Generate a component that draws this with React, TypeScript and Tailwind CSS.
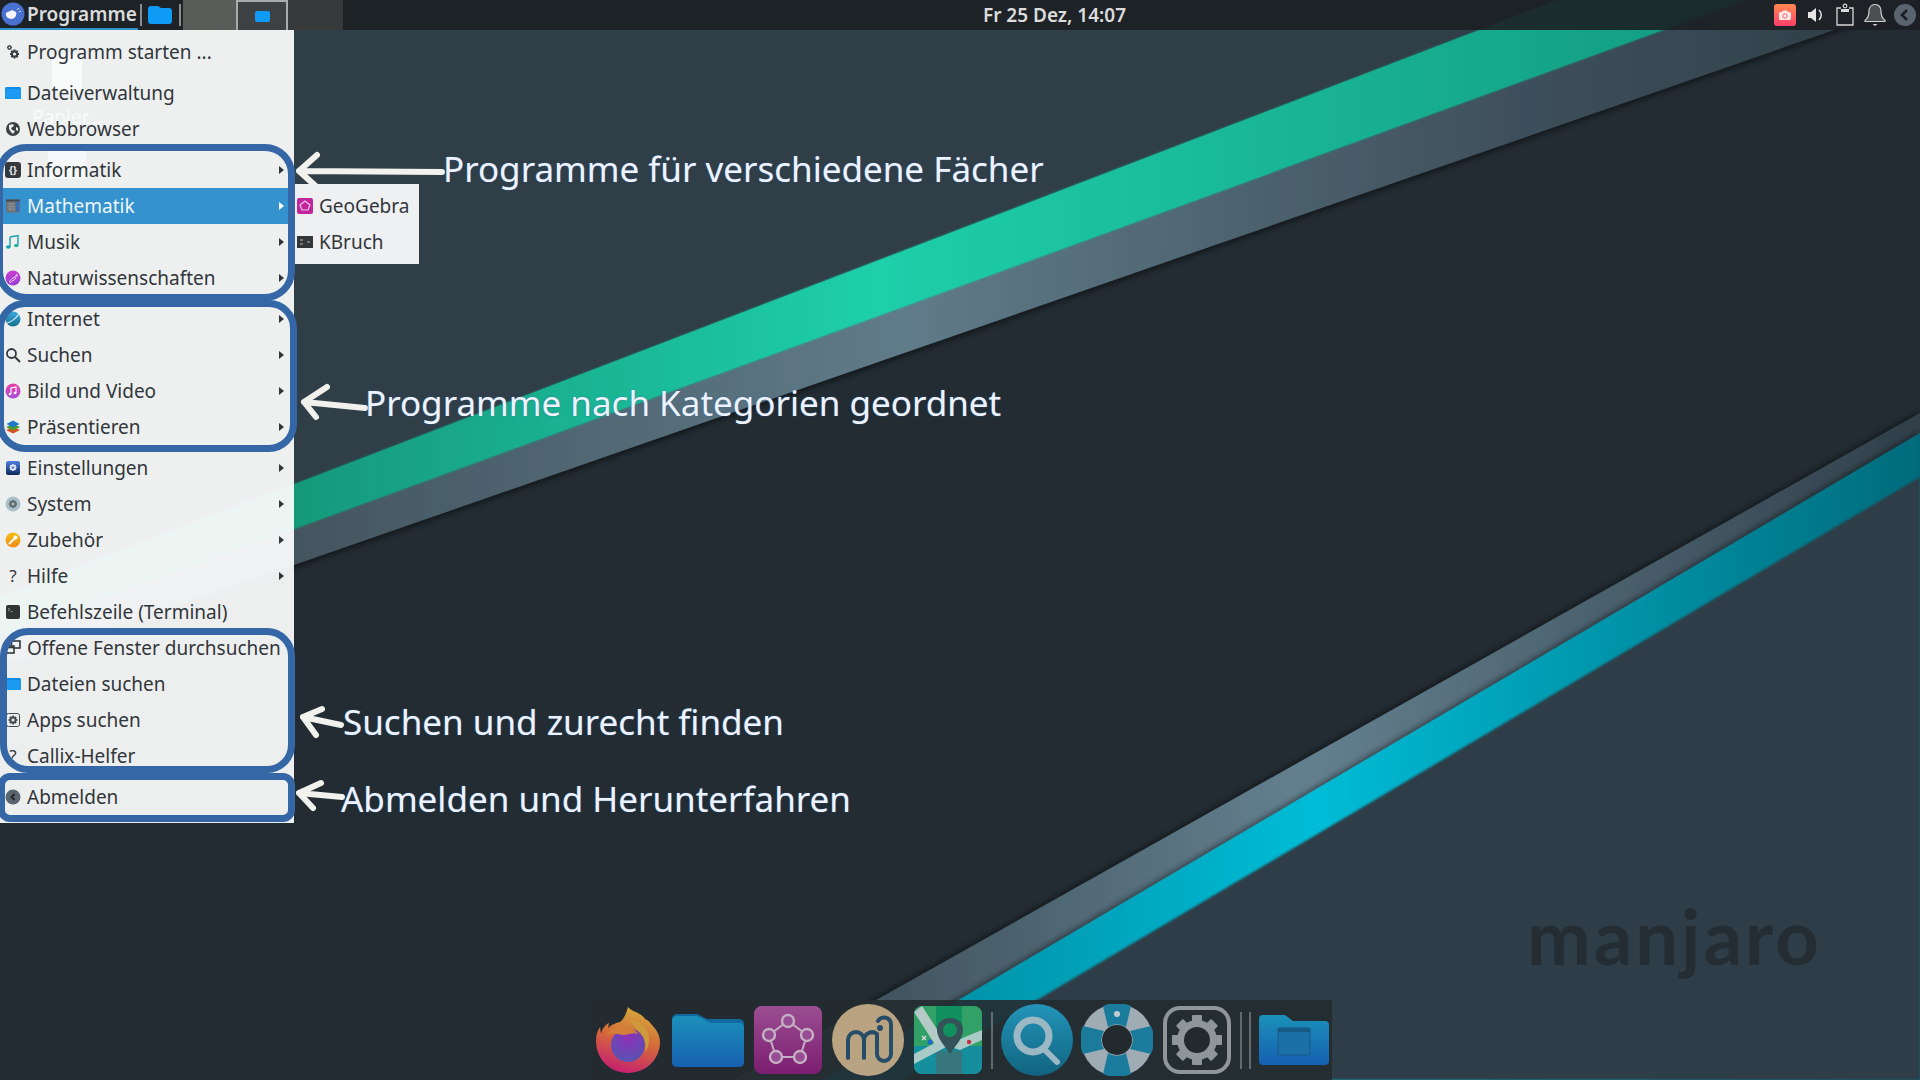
import { ReactNode } from "react";

const Svg = ({ children, size = 16, className = "" }: { children: ReactNode; size?: number; className?: string }) => (
  <svg width={size} height={size} viewBox="0 0 16 16" className={`shrink-0 ${className}`}>
    {children}
  </svg>
);

const Gear = ({ cx, cy, r, fill, hole }: { cx: number; cy: number; r: number; fill: string; hole: string }) => (
  <g>
    {[0, 45, 90, 135].map((a) => (
      <rect key={a} x={cx - r * 0.28} y={cy - r * 1.25} width={r * 0.56} height={r * 2.5} fill={fill} transform={`rotate(${a} ${cx} ${cy})`} />
    ))}
    <circle cx={cx} cy={cy} r={r} fill={fill} />
    <circle cx={cx} cy={cy} r={r * 0.45} fill={hole} />
  </g>
);

const FolderSmall = () => (
  <Svg>
    <rect x="0" y="2" width="16" height="12" rx="1.5" fill="#0d8be6" />
    <rect x="0" y="4" width="16" height="10" rx="1" fill="#1a9af0" />
  </Svg>
);

const icons: Record<string, ReactNode> = {
  run: (
    <Svg>
      <Gear cx={9.5} cy={10} r={3.6} fill="#3a3f44" hole="#eff0f1" />
      <Gear cx={4.5} cy={3.5} r={2} fill="#3a3f44" hole="#eff0f1" />
    </Svg>
  ),
  folder: <FolderSmall />,
  globe: (
    <Svg>
      <circle cx="8" cy="8" r="7" fill="#3b4045" />
      <path d="M4 4l4-1 1 2-3 2 1 2 3 1-2 3-2-2-2-3zM11 6l2 1 0 3-2-1z" fill="#eff0f1" />
    </Svg>
  ),
  code: (
    <div className="w-4 h-4 rounded-[3px] bg-[#35393d] text-[#eff0f1] text-[10px] leading-4 text-center font-bold shrink-0">{"{}"}</div>
  ),
  calc: (
    <Svg>
      <rect x="1" y="1.5" width="14" height="13" rx="1" fill="#6d7378" />
      <rect x="1" y="1.5" width="14" height="2" fill="#474b50" />
      <rect x="11" y="3.5" width="3" height="10" fill="#2f70c0" />
      <path d="M3 6h7M3 8.500h7M3 11h7M5 4v9M8 4v9" stroke="#8f9599" strokeWidth="0.8" />
    </Svg>
  ),
  music: (
    <Svg>
      <path d="M5 3l8-1.500v9" stroke="#1c9cb0" strokeWidth="1.400" fill="none" />
      <path d="M5 3v10" stroke="#1c9cb0" strokeWidth="1.400" />
      <ellipse cx="3.300" cy="13" rx="2.300" ry="1.800" fill="#1c9cb0" />
      <ellipse cx="11.300" cy="11.500" rx="2.300" ry="1.800" fill="#25b09a" />
    </Svg>
  ),
  science: (
    <Svg>
      <defs>
        <linearGradient id="sci" x1="0" y1="0" x2="0" y2="1">
          <stop offset="0" stopColor="#c83fd0" />
          <stop offset="1" stopColor="#9a3fd8" />
        </linearGradient>
      </defs>
      <circle cx="8" cy="8" r="7.500" fill="url(#sci)" />
      <path d="M4 12C6 10 6 9 8 8s3-2 4-4M5 13c2-3 4-2 5-4s1-3 3-4" stroke="#f0d8f5" strokeWidth="1" fill="none" />
    </Svg>
  ),
  internet: (
    <Svg>
      <defs>
        <linearGradient id="net" x1="0" y1="0" x2="0" y2="1">
          <stop offset="0" stopColor="#3fa8e0" />
          <stop offset="1" stopColor="#12708a" />
        </linearGradient>
      </defs>
      <circle cx="8" cy="8" r="7.500" fill="url(#net)" />
      <path d="M2 12C6 11 11 7 14 3" stroke="#e6f4fa" strokeWidth="1.200" fill="none" />
    </Svg>
  ),
  search: (
    <Svg>
      <circle cx="6.500" cy="6.500" r="4.500" stroke="#33383d" strokeWidth="1.800" fill="none" />
      <path d="M10 10l5 5" stroke="#33383d" strokeWidth="2" />
    </Svg>
  ),
  media: (
    <Svg>
      <defs>
        <linearGradient id="med" x1="0" y1="0" x2="0" y2="1">
          <stop offset="0" stopColor="#e83fa8" />
          <stop offset="1" stopColor="#a94fd8" />
        </linearGradient>
      </defs>
      <circle cx="8" cy="8" r="7.500" fill="url(#med)" />
      <path d="M6 11V5l5-1v6" stroke="#fff" strokeWidth="1.100" fill="none" />
      <circle cx="5" cy="11" r="1.300" fill="#fff" />
      <circle cx="10" cy="10" r="1.300" fill="#fff" />
    </Svg>
  ),
  layers: (
    <Svg>
      <path d="M1 11l7-3 7 3-7 3.500z" fill="#d8501f" />
      <path d="M1 8l7-3 7 3-7 3.500z" fill="#4a9a2c" />
      <path d="M1.500 5L8 1.500 14.500 5 8 8.500z" fill="#1f78c8" />
    </Svg>
  ),
  settings: (
    <Svg>
      <defs>
        <linearGradient id="set" x1="0" y1="0" x2="0" y2="1">
          <stop offset="0" stopColor="#4f7fe0" />
          <stop offset="1" stopColor="#0e2a5a" />
        </linearGradient>
      </defs>
      <rect x="1" y="1" width="14" height="14" rx="2" fill="url(#set)" />
      <Gear cx={8} cy={7.500} r={2.800} fill="#e6ecfa" hole="#4f6fc8" />
    </Svg>
  ),
  system: (
    <Svg>
      <circle cx="8" cy="8" r="7.500" fill="#a9c0c8" />
      <Gear cx={8} cy={8} r={3.300} fill="#5f6a70" hole="#a9c0c8" />
    </Svg>
  ),
  tools: (
    <Svg>
      <defs>
        <linearGradient id="too" x1="0" y1="0" x2="0" y2="1">
          <stop offset="0" stopColor="#f5bd10" />
          <stop offset="1" stopColor="#f08c1a" />
        </linearGradient>
      </defs>
      <circle cx="8" cy="8" r="7.500" fill="url(#too)" />
      <path d="M4.500 11.500L9.500 6.500" stroke="#fff" strokeWidth="1.800" strokeLinecap="round" />
      <circle cx="10.500" cy="5.500" r="2" fill="#fff" />
    </Svg>
  ),
  help: <div className="w-4 h-5 text-[17px] leading-5 text-center text-[#33383d] shrink-0">?</div>,
  terminal: (
    <Svg>
      <rect x="1" y="1" width="14" height="14" rx="2" fill="#2e3532" />
      <path d="M3 4l2 1.500-2 1.500M5.500 7.500h2" stroke="#bbb" strokeWidth="0.700" fill="none" />
    </Svg>
  ),
  windows: (
    <Svg>
      <rect x="6.500" y="1" width="8.500" height="7" fill="none" stroke="#33383d" strokeWidth="1.600" />
      <rect x="1" y="6" width="8" height="7" fill="#eff0f1" stroke="#33383d" strokeWidth="1.600" />
      <path d="M1 7.500h8" stroke="#33383d" strokeWidth="1.600" />
    </Svg>
  ),
  apps: (
    <Svg>
      <rect x="1.500" y="1.500" width="13" height="13" rx="2" fill="none" stroke="#44494e" strokeWidth="1" />
      <Gear cx={8} cy={8} r={3.500} fill="#44494e" hole="#eff0f1" />
    </Svg>
  ),
  logout: (
    <Svg>
      <circle cx="8" cy="8" r="7.500" fill="#5a6570" />
      <path d="M9.500 5L6.500 8l3 3" stroke="#1f2428" strokeWidth="1.800" fill="none" />
    </Svg>
  ),
};

type Item = { label: string; icon: string; arrow?: boolean; active?: boolean; sep?: boolean };

const menu: Item[] = [
  { label: "Programm starten ...", icon: "run", sep: true },
  { label: "Dateiverwaltung", icon: "folder" },
  { label: "Webbrowser", icon: "globe", sep: true },
  { label: "Informatik", icon: "code", arrow: true },
  { label: "Mathematik", icon: "calc", arrow: true, active: true },
  { label: "Musik", icon: "music", arrow: true },
  { label: "Naturwissenschaften", icon: "science", arrow: true, sep: true },
  { label: "Internet", icon: "internet", arrow: true },
  { label: "Suchen", icon: "search", arrow: true },
  { label: "Bild und Video", icon: "media", arrow: true },
  { label: "Präsentieren", icon: "layers", arrow: true, sep: true },
  { label: "Einstellungen", icon: "settings", arrow: true },
  { label: "System", icon: "system", arrow: true },
  { label: "Zubehör", icon: "tools", arrow: true },
  { label: "Hilfe", icon: "help", arrow: true },
  { label: "Befehlszeile (Terminal)", icon: "terminal" },
  { label: "Offene Fenster durchsuchen", icon: "windows" },
  { label: "Dateien suchen", icon: "folder" },
  { label: "Apps suchen", icon: "apps" },
  { label: "Callix-Helfer", icon: "help", sep: true },
  { label: "Abmelden", icon: "logout" },
];

const Row = ({ item }: { item: Item }) => (
  <>
    <div className={`h-9 flex items-center gap-[6px] pl-[5px] pr-[10px] ${item.active ? "bg-[#3492ce] text-[#eef6fb]" : "text-[#31363b]"}`}>
      {icons[item.icon]}
      <span className="flex-1 whitespace-nowrap">{item.label}</span>
      {item.arrow && (
        <span className={`w-0 h-0 border-y-[4px] border-y-transparent border-l-[5px] ${item.active ? "border-l-white" : "border-l-[#31363b]"}`} />
      )}
    </div>
    {item.sep && <div className="h-[5px]" />}
  </>
);

const Wallpaper = () => (
  <svg className="absolute inset-0" width="1920" height="1080" viewBox="0 0 1920 1080">
    <defs>
      <linearGradient id="green" gradientUnits="userSpaceOnUse" x1="290" y1="0" x2="1745" y2="0">
        <stop offset="0" stopColor="#15987a" />
        <stop offset="0.4" stopColor="#1ecfaa" />
        <stop offset="0.8" stopColor="#16ab8c" />
        <stop offset="1" stopColor="#129a80" />
      </linearGradient>
      <linearGradient id="slate" gradientUnits="userSpaceOnUse" x1="290" y1="0" x2="1900" y2="0">
        <stop offset="0" stopColor="#43555f" />
        <stop offset="0.38" stopColor="#607b89" />
        <stop offset="0.75" stopColor="#3f515c" />
        <stop offset="1" stopColor="#2f3e47" />
      </linearGradient>
      <linearGradient id="slate2" gradientUnits="userSpaceOnUse" x1="800" y1="0" x2="1920" y2="0">
        <stop offset="0" stopColor="#3a4c56" />
        <stop offset="0.45" stopColor="#64808f" />
        <stop offset="1" stopColor="#303f49" />
      </linearGradient>
      <linearGradient id="teal" gradientUnits="userSpaceOnUse" x1="880" y1="0" x2="1920" y2="0">
        <stop offset="0" stopColor="#008a9f" />
        <stop offset="0.42" stopColor="#00bcd6" />
        <stop offset="1" stopColor="#006b7b" />
      </linearGradient>
      <filter id="down" x="-5%" y="-20%" width="110%" height="140%">
        <feDropShadow dx="0" dy="3" stdDeviation="3" floodColor="#000" floodOpacity="0.5" />
      </filter>
      <filter id="up" x="-5%" y="-20%" width="110%" height="140%">
        <feDropShadow dx="0" dy="-2" stdDeviation="3" floodColor="#000" floodOpacity="0.5" />
      </filter>
      <filter id="soft">
        <feGaussianBlur stdDeviation="1.200" />
      </filter>
    </defs>
    <rect width="1920" height="1080" fill="#222c32" />
    <polygon points="0,0 1920,0 1920,0 0,667" fill="#2f3e47" />
    <polygon points="0,667 1920,0 1745,0 0,636" fill="url(#slate)" filter="url(#down)" />
    <polygon points="0,636 1745,0 1558,0 0,597" fill="url(#green)" filter="url(#soft)" />
    <polygon points="0,636 1745,0 1558,0 0,597" fill="url(#green)" />
    <polygon points="734,1080 1920,413 1920,1080" fill="url(#slate2)" filter="url(#up)" />
    <polygon points="823,1080 1920,433 1920,1080" fill="url(#teal)" filter="url(#up)" />
    <polygon points="902,1080 1920,477 1920,1080" fill="#2f3e47" filter="url(#soft)" />
  </svg>
);

const Rings = () => (
  <>
    <div className="absolute left-[-4px] top-[144px] w-[299px] h-[157px] border-[7px] border-[#3566a6] rounded-[30px]" />
    <div className="absolute left-[-3px] top-[300px] w-[300px] h-[152px] border-[7px] border-[#3566a6] rounded-[28px]" />
    <div className="absolute left-0 top-[628px] w-[295px] h-[145px] border-[7px] border-[#3566a6] rounded-[28px]" />
    <div className="absolute left-[-2px] top-[773px] w-[297px] h-[49px] border-[7px] border-[#3566a6] rounded-[12px]" />
  </>
);

const Arrows = () => (
  <svg className="absolute inset-0 pointer-events-none" width="1920" height="1080" viewBox="0 0 1920 1080">
    <g stroke="#f1f1ee" strokeWidth="6" strokeLinecap="round" strokeLinejoin="round" fill="none">
      <path d="M442 172L299 171M317 155L299 171L319 189" />
      <path d="M365 408L304 402M327 387L304 402L316 417" />
      <path d="M341 725L303 717M322 709L303 717L316 735" />
      <path d="M342 797L299 793M321 783L299 793L313 808" />
    </g>
  </svg>
);

const labels = [
  { text: "Programme für verschiedene Fächer", className: "left-[443px] top-[146px]" },
  { text: "Programme nach Kategorien geordnet", className: "left-[365px] top-[380px]" },
  { text: "Suchen und zurecht finden", className: "left-[343px] top-[699px]" },
  { text: "Abmelden und Herunterfahren", className: "left-[341px] top-[776px]" },
];

const KickoffLogo = () => (
  <svg width="24" height="24" viewBox="0 0 24 24" className="shrink-0">
    <circle cx="12" cy="12" r="11.500" fill="#4a70d2" />
    <path d="M5 11c2-2 4-1 6-3 1 1 3 1 4 2 1 2 0 6-4 7-4 0-7-3-6-6z" fill="#f4f6fb" />
    <path d="M16 8l2-2M18 10l2-1" stroke="#dfe7f8" strokeWidth="1" />
  </svg>
);

const Tray = () => (
  <div className="flex items-center h-full pr-1">
    <svg width="22" height="22" viewBox="0 0 22 22" className="mr-3">
      <defs>
        <linearGradient id="cam" x1="0" y1="0" x2="0" y2="1">
          <stop offset="0" stopColor="#ff8a50" />
          <stop offset="1" stopColor="#ff3f6c" />
        </linearGradient>
      </defs>
      <rect width="22" height="22" rx="3" fill="url(#cam)" />
      <rect x="5" y="8" width="12" height="8" rx="1.500" fill="#fde8e4" />
      <rect x="8.500" y="6.500" width="5" height="2" fill="#fde8e4" />
      <circle cx="11" cy="12" r="2.200" fill="none" stroke="#f2607a" strokeWidth="1" />
    </svg>
    <svg width="16" height="16" viewBox="0 0 16 16" className="mr-3">
      <path d="M0 5h3l5-4v14l-5-4H0z" fill="#e6e6e6" />
      <path d="M11 3c3 3 3 7 0 10" stroke="#e6e6e6" strokeWidth="1.500" fill="none" />
    </svg>
    <svg width="18" height="24" viewBox="0 0 18 24" className="mr-[10px]">
      <path d="M5 5H1v17h16V5h-4" fill="none" stroke="#d8d8d8" strokeWidth="1.300" />
      <circle cx="9" cy="3" r="1.800" fill="none" stroke="#d8d8d8" strokeWidth="1.200" />
      <path d="M5 9V6h8v3z" fill="#d8d8d8" />
    </svg>
    <svg width="22" height="24" viewBox="0 0 22 24" className="mr-2">
      <path d="M11 1.500c-4 0-6 3-6 7 0 5-1.500 7-4 9v1h20v-1c-2.500-2-4-4-4-9 0-4-2-7-6-7z" fill="#4c4f52" stroke="#d0d0d0" strokeWidth="1.200" />
      <path d="M8.500 21h5l-2.500 2z" fill="#d0d0d0" />
    </svg>
    <svg width="22" height="22" viewBox="0 0 22 22">
      <circle cx="11" cy="11" r="11" fill="#5a6470" />
      <path d="M13 6l-5 5 5 5" stroke="#1c2025" strokeWidth="2.600" fill="none" />
    </svg>
  </div>
);

const Firefox = () => (
  <svg width="64" height="66" viewBox="0 0 64 66" className="shrink-0">
    <defs>
      <linearGradient id="ffo" x1="0.700" y1="0" x2="0.400" y2="1">
        <stop offset="0" stopColor="#e8bd3c" />
        <stop offset="0.5" stopColor="#e8703a" />
        <stop offset="1" stopColor="#d81f78" />
      </linearGradient>
      <radialGradient id="ffp" cx="0.500" cy="0.300" r="0.800">
        <stop offset="0" stopColor="#9a30c8" />
        <stop offset="1" stopColor="#5560c0" />
      </radialGradient>
    </defs>
    <path d="M32 0c4 5 14 6 17 12 3 1 5 3 6 5 4 4 9 10 9 18 0 17-14 31-32 31S0 52 0 34c0-5 1-10 4-14l1 7c1-5 4-9 8-11l-1 5c4-4 8-5 12-6 4-3 6-8 8-15z" fill="url(#ffo)" />
    <circle cx="32" cy="38" r="17" fill="url(#ffp)" />
    <path d="M9 28c7-2 12-1 18 0 6 0 10-3 15-1-3-5-8-8-14-8-7 0-13 3-19 9z" fill="#e8883a" />
    <path d="M34 13c8 0 15 6 18 13 2 7 1 14-3 19 2-10-2-18-8-22-2-4-4-7-7-10z" fill="#e0a83a" />
  </svg>
);

const Folder = () => (
  <svg width="72" height="53" viewBox="0 0 72 53" className="shrink-0">
    <defs>
      <linearGradient id="fold" x1="0" y1="0" x2="0" y2="1">
        <stop offset="0" stopColor="#1b9cc8" />
        <stop offset="1" stopColor="#1566c0" />
      </linearGradient>
    </defs>
    <path d="M5 0h20l10 5h32a5 5 0 015 5v38a5 5 0 01-5 5H5a5 5 0 01-5-5V5a5 5 0 015-5z" fill="#0f73ad" />
    <path d="M0 7a5 5 0 015-5h20l10 5 4 2h28a5 5 0 015 5v34a5 5 0 01-5 5H5a5 5 0 01-5-5z" fill="url(#fold)" />
  </svg>
);

const GeoGebra = () => (
  <svg width="68" height="68" viewBox="0 0 68 68" className="shrink-0">
    <defs>
      <linearGradient id="geo" x1="0" y1="0" x2="0" y2="1">
        <stop offset="0" stopColor="#a9529c" />
        <stop offset="1" stopColor="#851c78" />
      </linearGradient>
    </defs>
    <rect width="68" height="68" rx="8" fill="url(#geo)" />
    <polygon points="34,15 53,29 46,51 22,51 15,29" fill="none" stroke="#d5bfd3" strokeWidth="2" />
    {[
      [34, 15],
      [53, 29],
      [46, 51],
      [22, 51],
      [15, 29],
    ].map(([x, y]) => (
      <circle key={x} cx={x} cy={y} r="6" fill="#a5509e" stroke="#d5bfd3" strokeWidth="2.400" />
    ))}
  </svg>
);

const MuseScore = () => (
  <svg width="72" height="72" viewBox="0 0 72 72" className="shrink-0">
    <circle cx="36" cy="36" r="36" fill="#c9b08a" />
    <path d="M16 54V36a8 8 0 0116 0v18M32 36a8 8 0 0113-6V50a7 7 0 0014 0V20a7 7 0 00-13-3" fill="none" stroke="#27506e" strokeWidth="4" strokeLinecap="round" />
    <circle cx="48" cy="24" r="3" fill="#27506e" />
  </svg>
);

const Maps = () => (
  <svg width="68" height="68" viewBox="0 0 68 68" className="shrink-0">
    <clipPath id="mapc">
      <rect width="68" height="68" rx="8" />
    </clipPath>
    <g clipPath="url(#mapc)">
      <rect width="68" height="68" fill="#35ad6c" />
      <rect x="22" width="26" height="68" fill="#0f9c62" />
      <rect x="0" y="40" width="68" height="28" fill="#1399a8" />
      <rect x="22" y="45" width="26" height="23" fill="#3a7f86" />
      <path d="M0 58L34 40 46 44 68 34V24L46 33 34 30 0 48z" fill="#b8dcd8" />
      <path d="M0 6L22 40 30 34 8 0z" fill="#c5dbd6" />
      <path d="M36 12c-9 0-13 6-13 12 0 8 7 15 13 24 6-9 13-16 13-24 0-6-4-12-13-12z" fill="#37565c" />
      <circle cx="36" cy="24" r="7" fill="#0f9c62" />
      <circle cx="16" cy="36" r="2.500" fill="#1e6fd8" />
      <circle cx="55" cy="36" r="2.200" fill="#d8303a" />
      <path d="M8 30l4 4M12 30l-4 4" stroke="#e8f0ee" strokeWidth="1.300" />
    </g>
  </svg>
);

const SearchApp = () => (
  <svg width="72" height="72" viewBox="0 0 72 72" className="shrink-0">
    <defs>
      <linearGradient id="sea" x1="0" y1="0" x2="0" y2="1">
        <stop offset="0" stopColor="#23a0c8" />
        <stop offset="1" stopColor="#0f6a88" />
      </linearGradient>
    </defs>
    <circle cx="36" cy="36" r="36" fill="url(#sea)" />
    <circle cx="32" cy="32" r="16" fill="none" stroke="#a8c8d4" strokeWidth="7" />
    <path d="M44 46l12 12" stroke="#a8c8d4" strokeWidth="6" strokeLinecap="round" />
  </svg>
);

const Lifebuoy = () => (
  <svg width="72" height="72" viewBox="0 0 72 72" className="shrink-0">
    <circle cx="36" cy="36" r="36" fill="#aebac1" />
    <path d="M22 2a36 36 0 0128 0l-5 21a16 16 0 00-18 0zM70 22a36 36 0 010 28l-21-5a16 16 0 000-18zM50 70a36 36 0 01-28 0l5-21a16 16 0 0018 0zM2 50a36 36 0 010-28l21 5a16 16 0 000 18z" fill="#1a84a8" />
    <circle cx="36" cy="36" r="15" fill="#232a2e" />
    <circle cx="36" cy="10" r="3" fill="#d4dde2" />
  </svg>
);

const SettingsApp = () => (
  <svg width="68" height="68" viewBox="0 0 68 68" className="shrink-0">
    <rect x="2" y="2" width="64" height="64" rx="15" fill="none" stroke="#9aa1a7" strokeWidth="4" />
    {[0, 45, 90, 135].map((a) => (
      <rect key={a} x="29" y="9" width="10" height="50" rx="1" fill="#9aa1a7" transform={`rotate(${a} 34 34)`} />
    ))}
    <circle cx="34" cy="34" r="20" fill="#9aa1a7" />
    <circle cx="34" cy="34" r="13" fill="#232a2e" />
  </svg>
);

const WindowFolder = () => (
  <svg width="70" height="50" viewBox="0 0 70 50" className="shrink-0">
    <defs>
      <linearGradient id="wf" x1="0" y1="0" x2="0" y2="1">
        <stop offset="0" stopColor="#1b9cc8" />
        <stop offset="1" stopColor="#1566c0" />
      </linearGradient>
    </defs>
    <path d="M4 0h22l8 6h32a4 4 0 014 4v36a4 4 0 01-4 4H4a4 4 0 01-4-4V4a4 4 0 014-4z" fill="url(#wf)" />
    <rect x="19" y="13" width="32" height="27" rx="1" fill="#1a78b4" stroke="#155f90" strokeWidth="1" />
    <rect x="19" y="13" width="32" height="4" fill="#155f90" />
  </svg>
);

export default function App() {
  return (
    <div className="relative w-[1920px] h-[1080px] overflow-hidden flex flex-col font-['Noto_Sans',sans-serif]">
      <Wallpaper />

      {/* desktop icons show faintly through the menu */}
      <div className="absolute left-[32px] top-[55px] w-[70px] flex flex-col items-center text-white text-[19px]">
        <div className="w-[30px] h-[36px] bg-white rounded-b-[5px] rounded-t-[2px]" />
        <span className="mt-[14px] leading-6 whitespace-nowrap">Papier...</span>
        <div className="w-[38px] h-[28px] mt-[22px] bg-[#bfe4ff] rounded-[3px]" />
      </div>

      <div className="absolute left-[1527px] top-[894px] text-[76px] leading-[84px] font-bold tracking-[3px] text-[#232d33] font-['Lato',sans-serif]">
        manjaro
      </div>

      <header className="relative h-[30px] flex items-center justify-between bg-[#1c1f23]/90 text-[#dcdcdc] text-[19px] font-semibold">
        <div className="flex items-center h-full">
          <div className="flex items-center gap-[2px] h-full pl-[1px] border-b-[2px] border-[#3492ce] w-[138px]">
            <KickoffLogo />
            <span>Programme</span>
          </div>
          <span className="w-[2px] h-[22px] bg-[#8a8d90] ml-[2px]" />
          <svg width="24" height="18" viewBox="0 0 24 18" className="ml-[6px]">
            <path d="M3 0h7l3 2h8a3 3 0 013 3v10a3 3 0 01-3 3H3a3 3 0 01-3-3V3a3 3 0 013-3z" fill="#0f9af5" />
          </svg>
          <span className="w-[2px] h-[22px] bg-[#8a8d90] ml-[7px]" />
          <div className="flex h-full ml-[2px]">
            <div className="w-[53px] bg-[#5a5c5a]" />
            <div className="w-[52px] bg-[#3e4144] border-2 border-b-0 border-[#a9abad] flex items-center justify-center">
              <div className="w-[15px] h-[11px] rounded-[2px] bg-[#0f9af5]" />
            </div>
            <div className="w-[55px] bg-[#37393b]" />
          </div>
        </div>
        <span className="mr-[8px]">Fr 25 Dez, 14:07</span>
        <Tray />
      </header>

      <main className="flex-1" />

      <footer className="relative mx-auto h-20 w-[744px] pl-2 flex items-center bg-[#232b30]/90 [&>*]:opacity-90">
        <Firefox />
        <div className="ml-3"><Folder /></div>
        <div className="ml-[10px]"><GeoGebra /></div>
        <div className="ml-[10px]"><MuseScore /></div>
        <div className="ml-[10px]"><Maps /></div>
        <span className="ml-[9px] w-[2px] h-[57px] bg-[#6a7075]" />
        <div className="ml-2"><SearchApp /></div>
        <div className="ml-2"><Lifebuoy /></div>
        <div className="ml-[10px]"><SettingsApp /></div>
        <span className="ml-[9px] w-[2px] h-[57px] bg-[#6a7075]" />
        <span className="ml-[7px] w-[2px] h-[57px] bg-[#6a7075]" />
        <div className="ml-2"><WindowFolder /></div>
      </footer>

      <Arrows />

      <nav className="absolute left-0 top-[30px] w-[294px] h-[793px] pt-1 bg-[#f9fafa]/95 text-[19px] overflow-hidden">
        {menu.map((item) => (
          <Row key={item.label} item={item} />
        ))}
      </nav>

      <div className="absolute left-[295px] top-[184px] w-[124px] h-20 pt-1 bg-[#eff0f1] text-[19px] text-[#31363b]">
        <div className="h-9 flex items-center gap-[6px] pl-[2px]">
          <Svg>
            <rect width="16" height="16" rx="2" fill="#c0259c" />
            <polygon points="8,3 13,7 11,12 5,12 3,7" fill="none" stroke="#f2c4e8" strokeWidth="1.200" />
          </Svg>
          <span>GeoGebra</span>
        </div>
        <div className="h-9 flex items-center gap-[6px] pl-[2px]">
          <Svg>
            <rect y="2" width="16" height="12" fill="#33373a" />
            <path d="M3 6h3M3 10h3M10 8h3" stroke="#bbb" strokeWidth="1" />
          </Svg>
          <span>KBruch</span>
        </div>
      </div>

      <Rings />

      {labels.map((label) => (
        <div
          key={label.text}
          className={`absolute whitespace-nowrap text-[35px] leading-[46px] text-[#eef3fb] [text-shadow:0_0_1.500px_#3566a6] ${label.className}`}
        >
          {label.text}
        </div>
      ))}
    </div>
  );
}
